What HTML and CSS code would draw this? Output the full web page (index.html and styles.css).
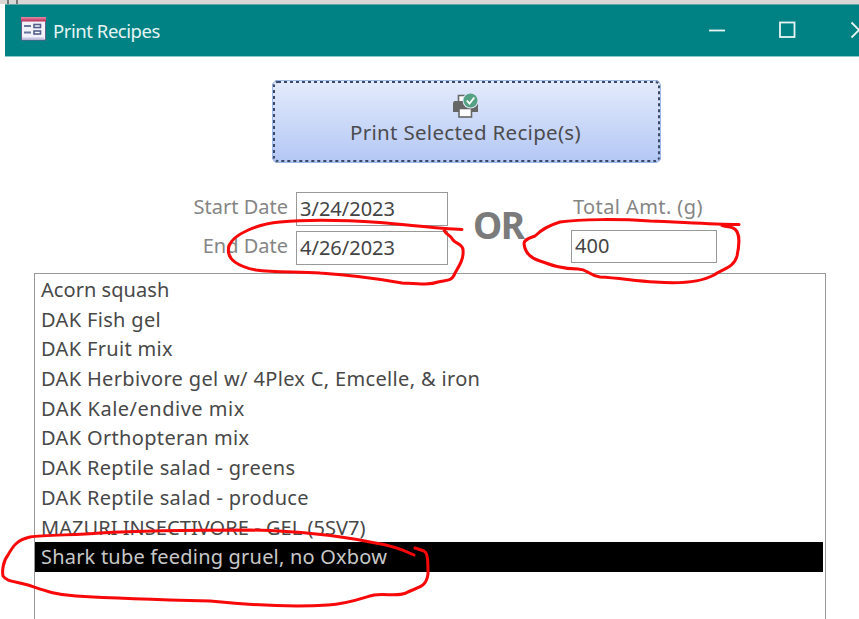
FILE: index.html
```
<!DOCTYPE html>
<html lang="en">
<head>
  <meta charset="UTF-8" />
  <meta name="viewport" content="width=device-width, initial-scale=1.0" />
  <title>Print Recipes</title>
  <link rel="stylesheet" href="styles.css">
</head>
<body>
<div class="strip"><span></span></div>

<div class="window">
  <header class="title-bar">
    <svg class="form-icon" width="25" height="24" viewBox="0 0 25 24">
      <defs>
        <linearGradient id="iconTop" x1="0" y1="0" x2="0" y2="1">
          <stop offset="0" stop-color="#e88aa5" />
          <stop offset="1" stop-color="#b52c57" />
        </linearGradient>
      </defs>
      <rect x="0.5" y="0.5" width="24" height="22.5" fill="#f3f1fa" stroke="#655d8a" />
      <rect x="0" y="0" width="25" height="4.5" fill="url(#iconTop)" />
      <path d="M3 9h7M3 15.500h7" stroke="#69769d" stroke-width="1.8" />
      <rect x="13" y="7.500" width="6.500" height="3" fill="#fff" stroke="#525f8e" stroke-width="1.6" />
      <rect x="13" y="14" width="6.500" height="3" fill="#fff" stroke="#525f8e" stroke-width="1.6" />
      <path d="M1 20.500h22v2H1z" fill="#c5c5e4" />
    </svg>
    <h1>Print Recipes</h1>
    <svg class="window-buttons" width="154" height="20" viewBox="0 0 154 20" fill="none" stroke="#e9f5f5" stroke-width="1.8">
      <path d="M4 10.500h16" />
      <rect x="75" y="2.500" width="14.500" height="14.500" />
      <path d="M146.500 2.500l15 15M146.500 17.500l15-15" />
    </svg>
  </header>

  <main>
    <button class="btn-print">
      <svg width="27" height="26" viewBox="0 0 27 26">
        <path d="M6.500 9V2.500h10V9" fill="#fff" stroke="#666" stroke-width="1.6" />
        <path d="M3 8h20q3 0 3 3v8H1v-8q0-3 2-3z" fill="#666" />
        <rect x="7" y="15.500" width="12.500" height="8.500" fill="#fff" stroke="#666" stroke-width="1.6" />
        <circle cx="18.500" cy="7.500" r="8" fill="#dfe7fa" />
        <circle cx="18.500" cy="7.500" r="7" fill="#55a184" />
        <path d="M14.800 7.500l2.700 3 4.800-6" fill="none" stroke="#fff" stroke-width="1.8" />
      </svg>
      <span>Print Selected Recipe(s)</span>
    </button>

    <div class="filters">
      <div class="dates">
        <label for="start">Start Date</label>
        <input type="text" id="start" value="3/24/2023" />
        <label for="end">End Date</label>
        <input type="text" id="end" value="4/26/2023" />
      </div>
      <div class="or">OR</div>
      <div class="amount">
        <label for="total">Total Amt. (g)</label>
        <input type="text" id="total" value="400" />
      </div>
    </div>

    <ul class="recipes">
      <li class="tight">Acorn squash</li>
      <li>DAK Fish gel</li>
      <li>DAK Fruit mix</li>
      <li>DAK Herbivore gel w/ 4Plex C, Emcelle, &amp; iron</li>
      <li class="wide">DAK Kale/endive mix</li>
      <li>DAK Orthopteran mix</li>
      <li>DAK Reptile salad - greens</li>
      <li>DAK Reptile salad - produce</li>
      <li class="tight">MAZURI INSECTIVORE - GEL (5SV7)</li>
      <li class="selected">Shark tube feeding gruel, no Oxbow</li>
    </ul>
  </main>
</div>

<!-- hand-drawn marks -->
<svg class="marks" width="859" height="619" viewBox="0 0 859 619">
  <path d="M462 229.500C440 229 410 225 380 222.500C345 220 305 219.500 280 222C258 224 233 234 229 246C225 260 240 267 256 270C275 273 300 271 320 273C350 275 380 279 402 283C420 284 430 285 438 282C446 280 452 282 455 273C459 266 464 259 463 250C463 244 456 244 453 240C450 234 447 236 444 230" />
  <path d="M739 224.500C710 224.500 680 222 650 221C620 219 580 219 560 222C550 225 540 231 535 236C530 238 524 239 524 244C525 252 530 258 540 261C551 265 562 269 578 269C588 269 588 275 600 277C620 278 635 281 655 282C680 284 701 282 714 275C722 269 734 268 737 256C739 247 741 231 733 228C729 226 725 227 722 225.500" />
  <path d="M414 555C402 549 390 545 370 542C330 534 290 531 250 530C200 530 150 530 100 533C75 535 45 535 30 537C17 540 13 546 8 555C3 561 2 571 3 576C7 582 15 581 28 585C43 590 55 595 76 596C110 598 170 600 210 601C250 605 295 607 328 605C350 604 364 597 374 595C386 593 396 597 406 593C416 587 426 589 428 574C428 562 428 553 424 551L415 548" />
</svg>
</body>
</html>
```
FILE: styles.css
```
body {
  margin: 0;
  height: 619px;
  overflow: hidden;
  background: #fff;
  color: #484848;
  font-family: "Noto Sans", sans-serif;
}
.strip {
  height: 4px;
  background: #d9d6d5;
  padding-left: 7px;
}
.strip span {
  display: block;
  width: 7px;
  height: 4px;
  border: solid #777;
  border-width: 0 2px;
}
.window {
  margin-left: 5px;
}
.title-bar {
  display: flex;
  align-items: center;
  box-sizing: border-box;
  height: 53px;
  padding-left: 16px;
  background: #008285;
  border-top: 1px solid #62a6a8;
  border-bottom: 1px solid #8fc9cb;
}
.form-icon {
  margin-bottom: 3px;
}
h1 {
  margin: 0 0 1px 7px;
  font-size: 18.5px;
  font-weight: normal;
  color: #e5f4f4;
  letter-spacing: -0.45px;
}
.window-buttons {
  margin-left: auto;
  margin-bottom: 2px;
}
main {
  display: flex;
  flex-direction: column;
  align-items: flex-start;
  padding-top: 23px;
}
.btn-print {
  display: flex;
  flex-direction: column;
  align-items: center;
  box-sizing: border-box;
  width: 389px;
  height: 83px;
  margin-left: 267px;
  padding: 10px 2px 0 0;
  border: 3px dotted #3c4964;
  border-radius: 6px;
  background: linear-gradient(#e4ebfb, #b3c7f5) border-box;
  outline: 1px solid #9db9ec;
  outline-offset: -1px;
  color: #4b4b4f;
  font: 20.5px/27px "Noto Sans", sans-serif;
  letter-spacing: 0.3px;
}
.filters {
  display: flex;
  height: 82px;
  margin: 28px 0 0 183px;
}
.filters label {
  color: #858585;
  font-size: 20px;
  line-height: 34px;
}
.filters input {
  box-sizing: border-box;
  width: 152px;
  height: 34px;
  padding: 0 3px 2px;
  border: 1px solid #999;
  color: #444;
  font: 20px "Noto Sans", sans-serif;
}
.dates {
  display: grid;
  grid-template-columns: 100px 152px;
  grid-template-rows: 34px 34px;
  gap: 5px 8px;
  text-align: right;
  padding-top: 1px;
}
.dates label {
  margin-top: -2px;
  white-space: nowrap;
}
.or {
  width: 123px;
  padding: 11px 0 0 25px;
  box-sizing: border-box;
  color: #7b7b7b;
  font-size: 37px;
  line-height: 46px;
  font-weight: bold;
  letter-spacing: -1.5px;
}
.amount {
  display: flex;
  flex-direction: column;
}
.amount label {
  margin: -1px 0 6px 2px;
  letter-spacing: 0.4px;
}
.amount input {
  width: 146px;
  height: 33px;
}
.recipes {
  box-sizing: border-box;
  width: 792px;
  height: 360px;
  margin: 0 0 0 29px;
  padding: 1px 2px 0 0;
  list-style: none;
  border: 1px solid #999;
  font-size: 20px;
  letter-spacing: 0.34px;
}
.recipes li {
  height: 29.7px;
  line-height: 29px;
  padding-left: 6px;
  white-space: nowrap;
}
.recipes .tight {
  letter-spacing: 0.05px;
}
.recipes .wide {
  letter-spacing: 0.5px;
}
.recipes .selected {
  background: #000;
  color: #c8c8c8;
  letter-spacing: 0.2px;
}
.marks {
  position: absolute;
  top: 0;
  left: 0;
  fill: none;
  stroke: #f80808;
  stroke-width: 3;
  stroke-linecap: round;
  stroke-linejoin: round;
}
```
